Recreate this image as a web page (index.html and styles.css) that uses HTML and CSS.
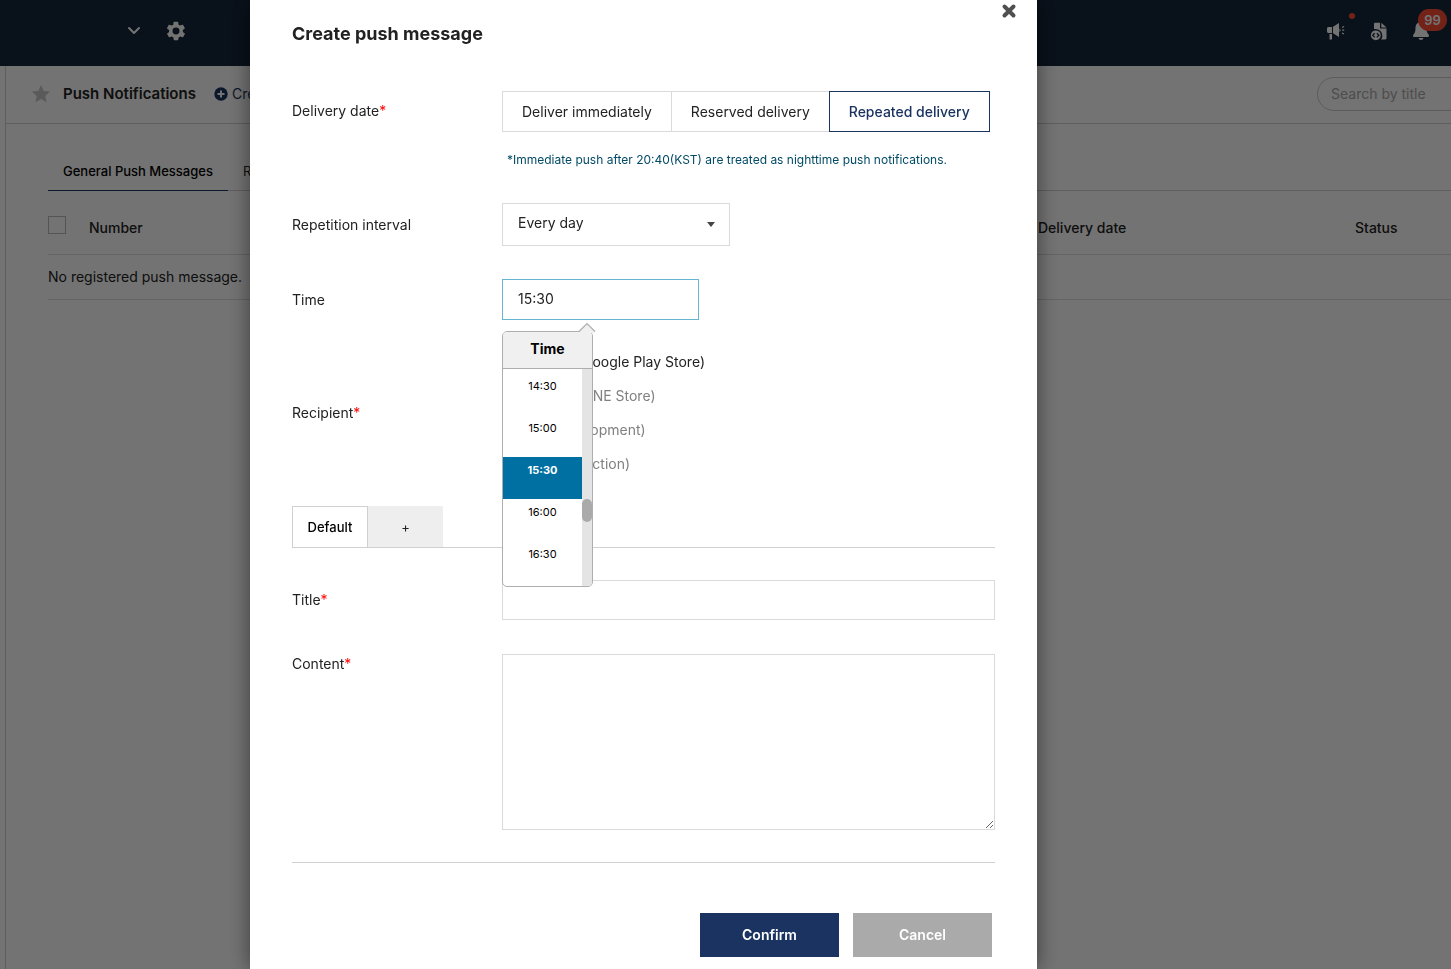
FILE: index.html
```html
<!DOCTYPE html>
<html lang="en">
<head>
    <meta charset="UTF-8">
    <meta name="viewport" content="width=device-width, initial-scale=1.0">
    <title>Push Notifications</title>
    <link rel="stylesheet" href="styles.css">
</head>
<body>
    <div class="page">
        <header class="topbar">
            <div class="topbar-left">
                <button class="icon-btn" type="button" aria-label="Select app">
                    <svg width="14" height="10" viewBox="0 0 14 10"><path d="M2 2l5 5 5-5" fill="none" stroke="currentColor" stroke-width="2" stroke-linecap="round" stroke-linejoin="round"/></svg>
                </button>
                <button class="icon-btn" type="button" aria-label="Settings">
                    <svg width="22" height="22" viewBox="0 0 24 24"><path fill="currentColor" d="M19.4 13c0-.3.1-.6.1-1s0-.7-.1-1l2.1-1.600c.2-.2.3-.4.1-.7l-2-3.400c-.1-.2-.4-.3-.6-.2l-2.500 1c-.5-.4-1.100-.7-1.700-1l-.4-2.600c0-.3-.2-.5-.5-.5h-4c-.2 0-.5.2-.5.4l-.4 2.700c-.6.2-1.100.6-1.700 1l-2.500-1c-.2-.1-.5 0-.6.2l-2 3.400c-.1.2-.1.500.1.7L4.500 11c0 .3-.1.600-.1 1s0 .7.100 1l-2.100 1.600c-.2.2-.3.400-.1.700l2 3.400c.1.2.4.300.6.200l2.500-1c.5.400 1.100.700 1.700 1l.4 2.600c0 .300.2.500.5.500h4c.2 0 .5-.2.5-.4l.4-2.700c.6-.2 1.100-.6 1.700-1l2.500 1c.2.1.5 0 .6-.2l2-3.400c.1-.2.1-.5-.1-.7zM12 15.800a3.800 3.800 0 1 1 0-7.600 3.800 3.800 0 0 1 0 7.600z"/></svg>
                </button>
            </div>
            <div class="topbar-right">
                <button class="icon-btn" type="button" aria-label="Announcements">
                    <svg width="20" height="20" viewBox="0 0 20 20"><path fill="currentColor" d="M1 7.500C1 6.700 1.500 6 2.500 6H6v6H2.500C1.500 12 1 11.400 1 10.500zM7 5.800L13 2v14l-6-3.700zM3.500 13H6v5.500H3.500zM13.500 7.500c1.500.5 1.500 3 0 3.500z"/><path d="M16 6.500l2-1M16.200 9.200h2M16 12l2 1" stroke="currentColor" stroke-width="1.200" fill="none"/></svg>
                    <span class="dot"></span>
                </button>
                <button class="icon-btn" type="button" aria-label="Developer docs">
                    <svg width="18" height="20" viewBox="0 0 18 20"><path fill="currentColor" d="M4 8V3c0-.7.5-1.200 1.200-1.200H10V7.500h6.500v9.800c0 .7-.5 1.200-1.200 1.200H11c1-1.300 1.300-2.500 1.300-3.800C12.300 11 9.500 7.500 4 8z"/><path fill="currentColor" d="M11.300 1.800l5.200 4.700h-5.200z"/><circle cx="5.800" cy="14.300" r="4.900" fill="currentColor"/><path d="M4.700 12.200l-2 2.100 2 2.100M6.900 12.200l2 2.100-2 2.100" fill="none" stroke="#16263a" stroke-width="1.300"/></svg>
                </button>
                <button class="icon-btn" type="button" aria-label="Notifications">
                    <svg width="18" height="20" viewBox="0 0 18 20"><path fill="currentColor" d="M9 1c-3.600 0-5.500 2.600-5.500 6 0 3.700-.8 5.300-2.200 6.800-.7.800-.3 2.200.8 2.200h13.800c1.100 0 1.500-1.400.8-2.200-1.400-1.500-2.200-3.100-2.200-6.800 0-3.400-1.900-6-5.500-6zM6.500 17h5c-.3 1.300-1.200 2-2.500 2s-2.200-.7-2.500-2z"/></svg>
                    <span class="badge">99</span>
                </button>
            </div>
        </header>

        <main class="content">
            <div class="title-bar">
                <button class="star" type="button" aria-label="Add to favorites">
                    <svg width="20" height="20" viewBox="0 0 20 20"><path fill="currentColor" d="M10 1l2.700 5.900 6.300.7-4.700 4.300 1.300 6.400L10 15.100l-5.600 3.200 1.300-6.400L1 7.600l6.300-.7z"/></svg>
                </button>
                <h1>Push Notifications</h1>
                <a class="create-link" href="#">
                    <svg width="14" height="14" viewBox="0 0 14 14"><circle cx="7" cy="7" r="6.700" fill="currentColor"/><path d="M7 3.500v7M3.500 7h7" stroke="#fff" stroke-width="2"/></svg>
                    Create
                </a>
                <input class="search" type="search" placeholder="Search by title" aria-label="Search by title">
            </div>

            <div class="list">
                <nav class="list-tabs">
                    <a class="active" href="#">General Push Messages</a>
                    <a href="#">Repeated Push Messages</a>
                </nav>
                <table>
                    <thead>
                        <tr>
                            <th class="col-check"><input type="checkbox" aria-label="Select all"></th>
                            <th class="col-number">Number</th>
                            <th class="col-date">Delivery date</th>
                            <th class="col-status">Status</th>
                        </tr>
                    </thead>
                    <tbody>
                        <tr><td colspan="4">No registered push message.</td></tr>
                    </tbody>
                </table>
            </div>
        </main>
    </div>

    <div class="overlay">
        <form class="modal" role="dialog" aria-labelledby="modal-title">
            <button class="close" type="button" aria-label="Close">
                <svg width="16" height="16" viewBox="0 0 16 16"><path d="M3.500 3.500l9 9M12.500 3.500l-9 9" stroke="currentColor" stroke-width="4" stroke-linecap="round"/></svg>
            </button>
            <h2 id="modal-title">Create push message</h2>

            <div class="row delivery">
                <span class="label">Delivery date<em>*</em></span>
                <div>
                    <div class="segments">
                        <button type="button">Deliver immediately</button>
                        <button type="button">Reserved delivery</button>
                        <button class="active" type="button">Repeated delivery</button>
                    </div>
                    <p class="hint">*Immediate push after 20:40(KST) are treated as nighttime push notifications.</p>
                </div>
            </div>

            <div class="row">
                <label class="label" for="interval">Repetition interval</label>
                <div class="select">
                    <select id="interval">
                        <option>Every day</option>
                    </select>
                </div>
            </div>

            <div class="row">
                <label class="label" for="time">Time</label>
                <div class="time">
                    <input id="time" type="text" value="15:30">
                    <div class="picker">
                        <svg class="picker-arrow" width="18" height="11" viewBox="0 0 18 11"><path d="M1 10l8-8 8 8v1H1z" fill="#f0f0f0"/><path d="M1 9.500l8-8 8 8" fill="none" stroke="#aeaeae" stroke-width="1.200"/></svg>
                        <div class="picker-title">Time</div>
                        <div class="picker-body">
                            <div class="picker-list">
                                <button type="button">14:30</button>
                                <button type="button">15:00</button>
                                <button class="selected" type="button">15:30</button>
                                <button type="button">16:00</button>
                                <button type="button">16:30</button>
                            </div>
                            <div class="picker-track"><div class="picker-thumb"></div></div>
                        </div>
                    </div>
                </div>
            </div>

            <div class="row recipient">
                <span class="label">Recipient<em>*</em></span>
                <div class="checks">
                    <label><input type="checkbox" checked>Android (Google Play Store)</label>
                    <label class="off"><input type="checkbox" disabled>Android (ONE Store)</label>
                    <label class="off"><input type="checkbox" disabled>iOS (Development)</label>
                    <label class="off"><input type="checkbox" disabled>iOS (Production)</label>
                </div>
            </div>

            <div class="lang-tabs">
                <button class="active" type="button">Default</button>
                <button type="button" aria-label="Add language">+</button>
            </div>

            <div class="row">
                <label class="label" for="title">Title<em>*</em></label>
                <input class="field" id="title" type="text">
            </div>

            <div class="row content-row">
                <label class="label" for="content">Content<em>*</em></label>
                <textarea class="field" id="content"></textarea>
            </div>

            <div class="actions">
                <button class="confirm" type="submit">Confirm</button>
                <button class="cancel" type="button">Cancel</button>
            </div>
        </form>
    </div>
</body>
</html>
```
FILE: styles.css
```css
* {
    box-sizing: border-box;
}

body {
    margin: 0;
    min-height: 100vh;
    overflow: hidden;
    font-family: Inter, 'Liberation Sans', sans-serif;
    font-size: 14px;
    line-height: 20px;
    color: #222;
    background: #fff;
}

button, input, select, textarea {
    font: inherit;
    color: inherit;
}

button {
    padding: 0;
    border: none;
    background: none;
    cursor: pointer;
}

svg {
    display: block;
}

.page {
    overflow: hidden;
}

/* top bar */
.topbar {
    display: flex;
    justify-content: space-between;
    align-items: center;
    height: 66px;
    padding: 0 21px 5px 127px;
    background: #16263a;
    color: #fff;
}

.topbar-left, .topbar-right {
    display: flex;
    align-items: center;
    gap: 24px;
}

.icon-btn {
    position: relative;
}

.dot {
    position: absolute;
    top: -8px;
    right: -9px;
    width: 6px;
    height: 6px;
    border-radius: 50%;
    background: #ff4d36;
}

.badge {
    position: absolute;
    top: -12px;
    left: 6px;
    width: 29px;
    height: 22px;
    border-radius: 11px;
    background: #ff4d36;
    font-size: 13px;
    font-weight: 600;
    line-height: 22px;
}

/* page behind the dialog */
.content {
    min-height: calc(100vh - 66px);
    margin-left: 5px;
    border-left: 1px solid #d0d0d0;
}

.title-bar {
    display: flex;
    align-items: center;
    height: 58px;
    padding: 0 0 2px 25px;
    border-bottom: 1px solid #d0d0d0;
}

.star {
    color: #c8c8c8;
}

h1 {
    margin: 0 18px 0 12px;
    font-size: 15px;
    font-weight: 600;
}

.create-link {
    display: flex;
    align-items: center;
    gap: 4px;
    color: #1a3361;
    text-decoration: none;
}

.search {
    flex: none;
    width: 220px;
    height: 34px;
    margin: 0 -86px 0 auto;
    padding: 0 13px;
    border: 1px solid #ccc;
    border-radius: 17px;
    background: #fff;
}

.search::placeholder {
    color: #aaa;
}

.list {
    padding: 28px 0 0 42px;
}

.list-tabs {
    display: flex;
    border-bottom: 1px solid #d0d0d0;
    font-size: 13px;
}

.list-tabs a {
    height: 39px;
    margin-bottom: -1px;
    padding: 0 15px;
    line-height: 38px;
    color: #222;
    text-decoration: none;
}

.list-tabs .active {
    border-bottom: 1px solid #1a3361;
    font-weight: 500;
    color: #000;
}

table {
    width: 100%;
    table-layout: fixed;
    border-collapse: collapse;
}

th, td {
    padding: 0;
    border-bottom: 1px solid #dedede;
    text-align: left;
}

th {
    height: 63px;
    padding-top: 11px;
    font-weight: 500;
}

td {
    height: 45px;
}

.col-check {
    width: 41px;
}

.col-date {
    width: 317px;
}

.col-status {
    width: 96px;
}

th input {
    appearance: none;
    display: block;
    width: 18px;
    height: 18px;
    margin: 0 0 6px;
    border: 1px solid #bbb;
}

/* dialog */
.overlay {
    position: fixed;
    inset: 0;
    display: flex;
    padding-left: 250px;
    background: rgba(0, 0, 0, 0.55);
}

.modal {
    position: relative;
    flex: 0 1 787px;
    padding: 22px 42px 12px;
    background: #fff;
    box-shadow: 0 0 20px rgba(0, 0, 0, 0.5);
}

.close {
    position: absolute;
    top: 3px;
    right: 20px;
    color: #505050;
}

h2 {
    margin: 0 0 45px;
    font-size: 18px;
    font-weight: 700;
    line-height: 24px;
}

.row {
    display: grid;
    grid-template-columns: 210px 1fr;
    align-items: center;
    margin-bottom: 33px;
}

.delivery, .content-row {
    align-items: start;
}

.delivery .label {
    margin-top: 10px;
}

.content-row {
    margin: 34px 0 32px;
}

.label em {
    font-style: normal;
    color: #f00;
}

.segments {
    display: flex;
}

.segments button {
    height: 41px;
    padding: 0 19px;
    border: 1px solid #dadada;
    white-space: nowrap;
}

.segments button + button {
    margin-left: -1px;
}

.segments .active {
    border-color: #1a3361;
    font-weight: 500;
    color: #1a3361;
}

.hint {
    margin: 18px 0 0 5px;
    font-size: 12px;
    color: #004a66;
}

.select {
    position: relative;
    width: 228px;
}

.select::after {
    content: '';
    position: absolute;
    top: 19px;
    right: 15px;
    border: 4px solid transparent;
    border-top: 5px solid #444;
    border-bottom: none;
    pointer-events: none;
}

.select select {
    appearance: none;
    display: block;
    width: 100%;
    height: 43px;
    padding: 0 15px 3px;
    border: 1px solid #dadada;
    background: #fff;
}

.time {
    position: relative;
    width: 197px;
}

.time input {
    display: block;
    width: 100%;
    height: 41px;
    padding: 0 15px 2px;
    border: 1px solid #66b5d2;
    outline: none;
}

.picker {
    position: absolute;
    top: 52px;
    left: 0;
    width: 91px;
    border: 1px solid #aeaeae;
    border-radius: 5px;
    background: #fff;
}

.picker-arrow {
    position: absolute;
    top: -10px;
    right: -4px;
}

.picker-title {
    height: 37px;
    border-bottom: 1px solid #aeaeae;
    border-radius: 4px 4px 0 0;
    background: #f0f0f0;
    font-weight: 700;
    line-height: 34px;
    text-align: center;
    color: #000;
}

.picker-body {
    display: flex;
}

.picker-list {
    flex: 1;
    padding: 4px 0 3px;
}

.picker-list button {
    display: block;
    width: 100%;
    height: 42px;
    padding-bottom: 16px;
    font-size: 11px;
    color: #000;
}

.picker-list .selected {
    background: #0070a3;
    font-weight: 700;
    color: #fff;
}

.picker-track {
    width: 10px;
    padding-top: 130px;
    border-radius: 0 0 4px 0;
    background: #e4e4e4;
}

.picker-thumb {
    height: 23px;
    border-radius: 5px;
    background: #aaa;
}

.recipient {
    margin: -8px 0 25px;
}

.checks label {
    display: flex;
    align-items: center;
    height: 34px;
}

.checks input {
    width: 16px;
    height: 16px;
    margin: 0 3px 0 0;
}

.checks .off {
    color: #808080;
}

.lang-tabs {
    display: flex;
    margin-bottom: 32px;
    border-bottom: 1px solid #d0d0d0;
}

.lang-tabs button {
    width: 75px;
    height: 41px;
    background: #eee;
    font-size: 13px;
}

.lang-tabs .active {
    width: 76px;
    border: 1px solid #d0d0d0;
    border-bottom: none;
    background: #fff;
    font-weight: 500;
    color: #000;
}

.field {
    display: block;
    width: 100%;
    height: 40px;
    padding: 0 15px;
    border: 1px solid #dadada;
    background: #fff;
}

textarea.field {
    height: 176px;
    padding: 10px 15px;
    resize: vertical;
}

.actions {
    display: flex;
    justify-content: flex-end;
    gap: 14px;
    padding: 50px 3px 0;
    border-top: 1px solid #d0d0d0;
}

.actions button {
    width: 139px;
    height: 44px;
    font-weight: 600;
    color: #fff;
}

.confirm {
    background: #1a3361;
}

.cancel {
    background: #aaa;
}
```
